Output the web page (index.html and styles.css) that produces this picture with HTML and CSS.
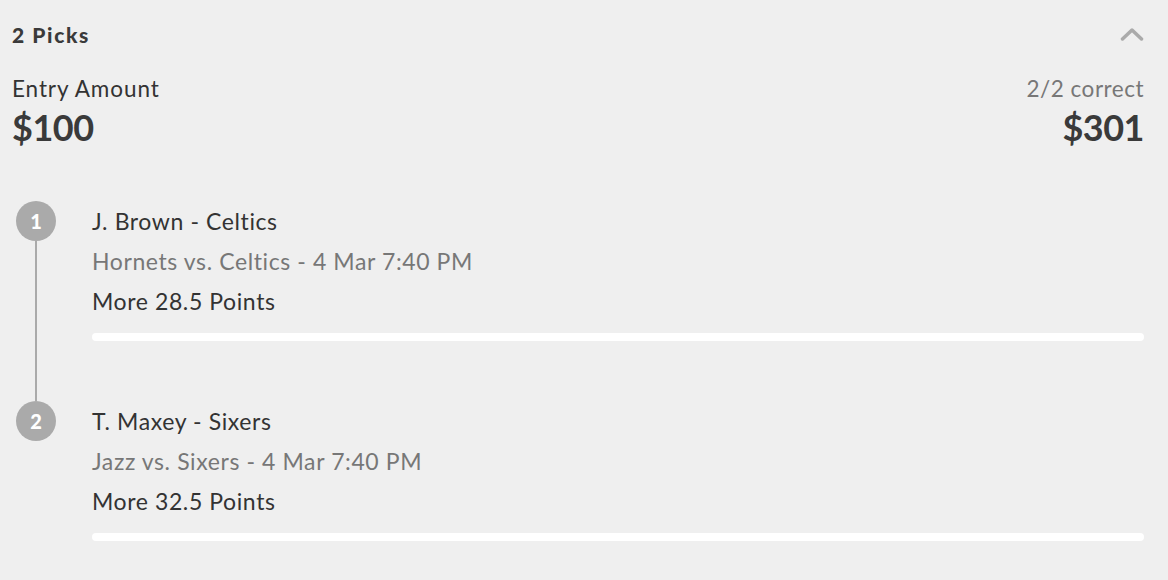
FILE: index.html
```html
<!DOCTYPE html>
<html>
<head>
<meta charset="utf-8">
<link rel="stylesheet" href="styles.css">
</head>
<body>
<div class="card">
  <div class="header">
    <div class="title">2 Picks</div>
    <svg class="chevron" width="24" height="14" viewBox="0 0 24 14"><path d="M2.5 12 L12 3 L21.5 12" fill="none" stroke="#aaaaaa" stroke-width="3.5" stroke-linecap="round" stroke-linejoin="round"/></svg>
  </div>
  <div class="summary">
    <div class="col">
      <div class="label">Entry Amount</div>
      <div class="amount">$100</div>
    </div>
    <div class="col right">
      <div class="label muted">2/2 correct</div>
      <div class="amount">$301</div>
    </div>
  </div>
  <div class="picks">
    <div class="pick">
      <div class="rail">
        <div class="num">1</div>
        <div class="line"></div>
      </div>
      <div class="body">
        <div class="player">J. Brown - Celtics</div>
        <div class="game">Hornets vs. Celtics - 4 Mar 7:40 PM</div>
        <div class="prop">More 28.5 Points</div>
        <div class="bar"></div>
      </div>
    </div>
    <div class="pick">
      <div class="rail">
        <div class="num">2</div>
      </div>
      <div class="body">
        <div class="player">T. Maxey - Sixers</div>
        <div class="game">Jazz vs. Sixers - 4 Mar 7:40 PM</div>
        <div class="prop">More 32.5 Points</div>
        <div class="bar"></div>
      </div>
    </div>
  </div>
</div>
</body>
</html>
```
FILE: styles.css
```css
html, body {
  margin: 0;
  padding: 0;
  background: #efefef;
}
body {
  font-family: Lato, "Open Sans", sans-serif;
  color: #333333;
  width: 1168px;
  height: 580px;
  overflow: hidden;
}
.card {
  padding: 0 24px 0 12px;
}
.header {
  height: 68px;
  display: flex;
  align-items: center;
  justify-content: space-between;
}
.title {
  font-size: 21px;
  font-weight: 900;
  letter-spacing: 1.6px;
  color: #3a3a3a;
}
.summary {
  display: flex;
  justify-content: space-between;
  padding-top: 1px;
}
.col {
  display: flex;
  flex-direction: column;
}
.col.right {
  align-items: flex-end;
}
.label {
  font-size: 22.5px;
  line-height: 40px;
  letter-spacing: 0.9px;
  color: #333333;
}
.label.muted {
  color: #777777;
  letter-spacing: 0.5px;
}
.amount {
  font-size: 36px;
  font-weight: 700;
  line-height: 36px;
  letter-spacing: -0.5px;
  color: #3a3a3a;
}
.picks {
  margin-top: 56px;
  display: flex;
  flex-direction: column;
}
.pick {
  display: flex;
  height: 200px;
}
.rail {
  display: flex;
  flex-direction: column;
  align-items: center;
  margin-left: 4px;
  width: 40px;
  margin-right: 36px;
}
.num {
  width: 40px;
  height: 40px;
  border-radius: 50%;
  background: #aaaaaa;
  color: #ffffff;
  font-weight: 900;
  font-size: 20px;
  display: flex;
  align-items: center;
  justify-content: center;
  flex: none;
}
.line {
  width: 2px;
  flex: 1;
  background: #aaaaaa;
}
.body {
  flex: 1;
  display: flex;
  flex-direction: column;
}
.player, .game, .prop {
  font-size: 23px;
  line-height: 40px;
  letter-spacing: 0.6px;
}
.player, .prop {
  color: #333333;
}
.game {
  color: #777777;
}
.bar {
  margin-top: 12px;
  height: 8px;
  border-radius: 4px;
  background: #ffffff;
}
```
